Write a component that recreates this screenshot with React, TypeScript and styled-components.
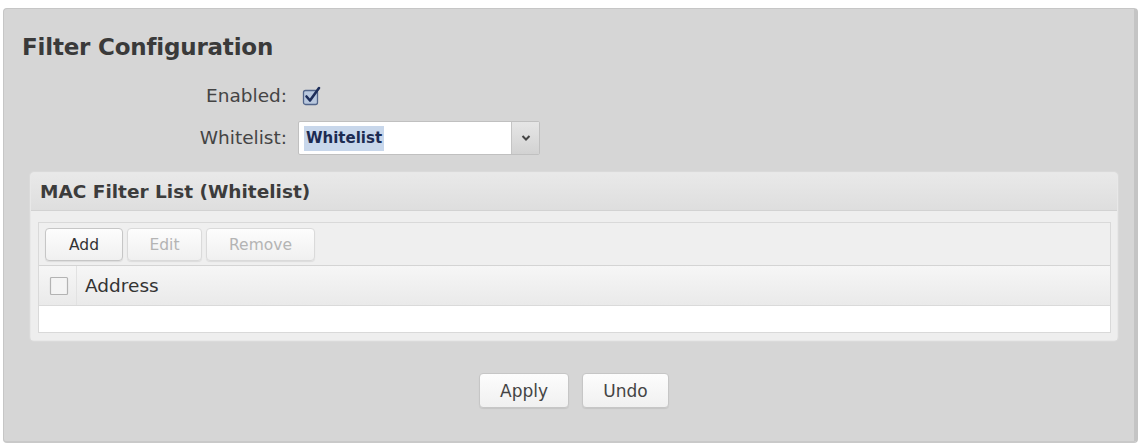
import React from 'react';
import styled, { createGlobalStyle } from 'styled-components';

const GlobalStyle = createGlobalStyle`
  html, body {
    margin: 0;
    padding: 0;
    background: #ffffff;
  }
  body {
    font-family: "DejaVu Sans", "Liberation Sans", sans-serif;
    color: #333;
  }
`;

const Page = styled.div`
  width: 1145px;
  height: 445px;
  padding: 8px 7px 2px 3px;
  box-sizing: border-box;
`;

const Panel = styled.div`
  height: 100%;
  box-sizing: border-box;
  background: #d6d6d6;
  border: 1px solid #c6c6c6;
  border-right: 4px solid #c4c4c4;
  border-bottom: 2px solid #c9c9c9;
  border-radius: 4px;
  padding: 24px 0 0 0;
  display: flex;
  flex-direction: column;
`;

const Title = styled.h2`
  margin: 0 0 0 18px;
  font-size: 23px;
  line-height: 28px;
  font-weight: bold;
  color: #3a3a3a;
  letter-spacing: -0.2px;
`;

const Form = styled.div`
  display: grid;
  grid-template-columns: 283px auto;
  column-gap: 11px;
  row-gap: 14px;
  align-items: center;
  justify-content: start;
  margin-top: 24px;
`;

const Label = styled.label`
  text-align: right;
  font-size: 18.5px;
  line-height: 22px;
  color: #444;
`;

const CheckBox = styled.span<{ $size: number; $offset?: number }>`
  display: inline-flex;
  width: ${p => p.$size}px;
  height: ${p => p.$size}px;
  margin-left: ${p => p.$offset ?? 0}px;
`;

const SelectBox = styled.div`
  display: flex;
  width: 242px;
  height: 34px;
  box-sizing: border-box;
  background: #fff;
  border: 1px solid #c0c0c0;
  border-radius: 2px;
`;

const SelectValue = styled.div`
  flex: 1;
  display: flex;
  align-items: center;
  padding-left: 5px;
`;

const Highlight = styled.span`
  background: #c8d7eb;
  color: #1c2b52;
  font-size: 15px;
  font-weight: bold;
  padding: 3px 2px 4px;
`;

const SelectArrow = styled.div`
  width: 27px;
  display: flex;
  align-items: center;
  justify-content: center;
  border-left: 1px solid #c4c4c4;
  background: linear-gradient(#e6e6e6, #d2d2d2);
`;

const Section = styled.div`
  margin: 17px 16px 0 26px;
  border: 1px solid #e8e8e8;
  border-radius: 4px;
  background: #ebebeb;
  box-shadow: 0 0 0 1px #dadada;
`;

const SectionHeader = styled.div`
  height: 37px;
  display: flex;
  align-items: center;
  padding-left: 9px;
  font-size: 18.5px;
  font-weight: bold;
  color: #3c3c3c;
  background: linear-gradient(#e9e9e9, #dedede);
  border-bottom: 1px solid #d2d2d2;
  border-radius: 3px 3px 0 0;
`;

const SectionBody = styled.div`
  padding: 11px 6px 7px 7px;
  background: #eeeeee;
`;

const Table = styled.div`
  border: 1px solid #d9d9d9;
  background: #fff;
`;

const Toolbar = styled.div`
  display: flex;
  gap: 4px;
  padding: 5px 6px 4px;
  background: #efefef;
  border-bottom: 1px solid #d4d4d4;
`;

const Button = styled.button<{ $w: number; $disabled?: boolean }>`
  width: ${p => p.$w}px;
  height: 33px;
  font-family: "DejaVu Sans", "Liberation Sans", sans-serif;
  font-size: 15.5px;
  color: ${p => (p.$disabled ? '#b4b4b4' : '#333')};
  background: linear-gradient(#fdfdfd, #f0f0f0);
  border: 1px solid ${p => (p.$disabled ? '#dadada' : '#c6c6c6')};
  border-radius: 4px;
  box-shadow: 0 1px 1px rgba(0, 0, 0, 0.08);
  padding: 0;
`;

const HeaderRow = styled.div`
  display: flex;
  align-items: center;
  height: 39px;
  background: linear-gradient(#f6f6f6, #eaeaea);
  border-bottom: 1px solid #dadada;
`;

const CheckCell = styled.div`
  width: 38px;
  height: 100%;
  display: flex;
  align-items: center;
  justify-content: center;
  border-right: 1px solid #e2e2e2;
  box-sizing: border-box;
  padding-left: 2px;
`;

const HeaderText = styled.div`
  padding-left: 8px;
  font-size: 18.5px;
  color: #333;
`;

const EmptyRow = styled.div`
  height: 26px;
  background: #fff;
`;

const Footer = styled.div`
  display: flex;
  justify-content: center;
  gap: 13px;
  margin-top: 32px;
  padding-left: 10px;
`;

const FooterButton = styled(Button)`
  height: 35px;
  font-size: 17px;
  color: #444;
`;

const CheckedIcon = () => (
  <svg width="20" height="20" viewBox="0 0 20 20">
    <rect x="1.5" y="4.5" width="14" height="14" rx="2" fill="#b9c8de" stroke="#52658a" strokeWidth="1.3" />
    <path d="M4.5 10.5 L8 14.5 L17 2" fill="none" stroke="#1d2d5a" strokeWidth="2.6" strokeLinecap="round" strokeLinejoin="round" />
  </svg>
);

const EmptyBox = () => (
  <svg width="20" height="20" viewBox="0 0 20 20">
    <rect x="1.5" y="1.5" width="17" height="17" rx="1" fill="#f4f4f4" stroke="#b3b3b3" strokeWidth="1.2" />
  </svg>
);

const Chevron = () => (
  <svg width="10" height="8" viewBox="0 0 10 8">
    <path d="M1.5 2 L5 5.5 L8.5 2" fill="none" stroke="#444" strokeWidth="2" />
  </svg>
);

export default function App() {
  return (
    <>
      <GlobalStyle />
      <Page>
        <Panel>
          <Title>Filter Configuration</Title>
          <Form>
            <Label>Enabled:</Label>
            <CheckBox $size={20} $offset={4}>
              <CheckedIcon />
            </CheckBox>
            <Label>Whitelist:</Label>
            <SelectBox>
              <SelectValue>
                <Highlight>Whitelist</Highlight>
              </SelectValue>
              <SelectArrow>
                <Chevron />
              </SelectArrow>
            </SelectBox>
          </Form>
          <Section>
            <SectionHeader>MAC Filter List (Whitelist)</SectionHeader>
            <SectionBody>
              <Table>
                <Toolbar>
                  <Button $w={78}>Add</Button>
                  <Button $w={75} $disabled>Edit</Button>
                  <Button $w={109} $disabled>Remove</Button>
                </Toolbar>
                <HeaderRow>
                  <CheckCell>
                    <CheckBox $size={20}>
                      <EmptyBox />
                    </CheckBox>
                  </CheckCell>
                  <HeaderText>Address</HeaderText>
                </HeaderRow>
                <EmptyRow />
              </Table>
            </SectionBody>
          </Section>
          <Footer>
            <FooterButton $w={90}>Apply</FooterButton>
            <FooterButton $w={87}>Undo</FooterButton>
          </Footer>
        </Panel>
      </Page>
    </>
  );
}
